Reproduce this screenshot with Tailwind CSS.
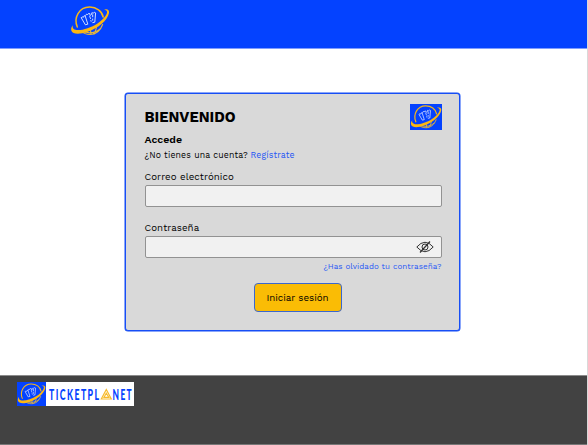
<!DOCTYPE html>
<html lang="es">
<head>
<meta charset="utf-8">
<title>Ticketplanet</title>
<script src="https://cdn.jsdelivr.net/npm/@tailwindcss/browser@4"></script>
</head>
<body class="h-[445px] w-[588px] overflow-hidden bg-[#d9d9d9] font-['Work_Sans',Inter,sans-serif] text-black">
<svg class="hidden">
  <symbol id="planet" viewBox="0 0 40 32">
    <g fill="none" stroke-linecap="round" stroke-linejoin="round">
      <path d="M7.300 22C3.400 13 9 2.200 19.500 2.100C26.500 2 32 6.300 33.200 12" stroke="#f7b719" stroke-width="1.500"/>
      <path d="M32.600 19.500C30.500 25.500 26 29.400 20 29.400c-3.600 0-6.500-1-8.800-3M15 27c5 1.500 10.500.6 15-3.200M20.500 25.500l.5 3.500M26.500 22.500c-.4 2.500-1.500 4.500-3 6" stroke="#e7b63a" stroke-width="1.100"/>
      <path d="M15.200 19.500L11.200 12.700l1.200-.8.900.5.500-1.200 1.300-.6 2.600 8.200ZM15.800 10.300l.7-1.100 1.200.4.800-1.100 1.300.1.400 2M21.500 9.400l.4-1.700 1.300.5 1-.9 1.400.6-.8 9.300-2 .4" stroke="#e9edff" stroke-width=".9"/>
      <path d="M19.800 11.500l.7 2M20.900 15.500l.2.800M22.700 9.800v2M22.700 14v1.200" stroke="#e9edff" stroke-width=".9"/>
    </g>
    <path d="M33.500 4.700C37 3.300 39.600 4.500 39 8C37.500 15.500 27.800 23.500 17.200 27C9.500 29.500 2.400 29.500 1.300 25.400C.8 23.600 1.500 21.700 2.800 20.200C2.200 22.700 3.200 24.500 6.400 25C11.600 25.700 20.700 23 27.500 18.500C34 14.200 38 8.500 36.900 6.300C36.300 5.100 35.500 4.800 33.500 4.700Z" fill="#fcb711"/>
  </symbol>
</svg>
<div class="flex h-full w-[586.500px] flex-col bg-white">
  <header class="h-[49px] shrink-0 border-b border-[#7f9dff] bg-[#0442ff] pt-[5px] pl-[69.500px]">
    <svg class="h-8 w-10"><use href="#planet"/></svg>
  </header>
  <main class="flex grow justify-center pt-[44px]">
    <form class="relative -ml-[2.500px] h-[238px] w-[335px] shrink-0 rounded-[3px] border border-[#174ef5] bg-[#d9d9d9] pr-[17px] pl-[19px] shadow-[0_0_0_0.500px_#174ef5]">
      <div class="flex h-[36px] justify-between pt-[10px]">
        <h1 class="mt-[4px] h-[18px] text-[14.700px] leading-[18px] font-bold whitespace-nowrap">BIENVENIDO</h1>
        <svg class="h-[26px] w-8 bg-[#0442ff]"><use href="#planet"/></svg>
      </div>
      <h2 class="mt-[3px] h-[14px] text-[10.500px] leading-[14px] font-semibold">Accede</h2>
      <p class="mt-[1px] h-[14px] text-[8.700px] leading-[14px] whitespace-nowrap"><span class="inline-block w-[106px] tracking-[0.160px]">¿No tienes una cuenta?</span><a class="tracking-[0.160px] text-[#2456f5]">Regístrate</a></p>
      <label class="mt-[7px] block h-[15px] text-[9.700px] leading-[15px] tracking-[0.080px]">Correo electrónico</label>
      <div class="mt-[1px] h-[22px] rounded-[2px] border border-[#929292] bg-[#f1f1f1]"></div>
      <label class="mt-[13px] block h-[15px] text-[9.700px] leading-[15px] tracking-[0.080px]">Contraseña</label>
      <div class="mt-[1px] flex h-[22px] items-center justify-end rounded-[2px] border border-[#929292] bg-[#f1f1f1] pr-[7px]">
        <svg class="h-3 w-[18px]" viewBox="0 0 18 12" fill="none" stroke="#333" stroke-width="1"><path d="M.8 6Q9-3.500 17.200 6Q9 15.500.8 6Z"/><circle cx="9" cy="6" r="3"/><path d="M14 .5L4 11.500" stroke-width="1.200"/></svg>
      </div>
      <a class="mt-[3px] block h-[12px] text-right text-[8px] leading-[12px] tracking-[0.090px] whitespace-nowrap text-[#2456f5]">¿Has olvidado tu contraseña?</a>
      <button type="button" class="mt-[10px] ml-[109px] block h-[29px] w-[88px] rounded-[4px] border border-[#3b67cf] bg-[#fabc05] text-[9.700px] leading-[27px] whitespace-nowrap">Iniciar sesión</button>
    </form>
  </main>
  <footer class="h-[70px] shrink-0 border-t border-b border-t-[#8b8b8b] border-b-[#777] bg-[#424242] pt-[6px] pl-[16.500px]">
    <div class="flex h-[24px] w-[117px] bg-white">
      <svg class="h-6 w-[29px] shrink-0 bg-[#0442ff]"><use href="#planet"/></svg>
      <svg class="h-6 w-[88px]" viewBox="0 0 88 24" font-family="Lato,sans-serif" font-weight="900" font-size="15" letter-spacing="2.500" fill="#0442ff">
        <text transform="translate(3 17.500) scale(.58 1)">TICKETPL</text>
        <text transform="translate(66.500 17.500) scale(.56 1)">NET</text>
        <path d="M60.300 7.500L65.300 17H55.300ZM60.300 11.200L62.800 15.300H58Z" fill="none" stroke="#f7bb2d" stroke-width="1.200"/>
      </svg>
    </div>
  </footer>
</div>
</body>
</html>
